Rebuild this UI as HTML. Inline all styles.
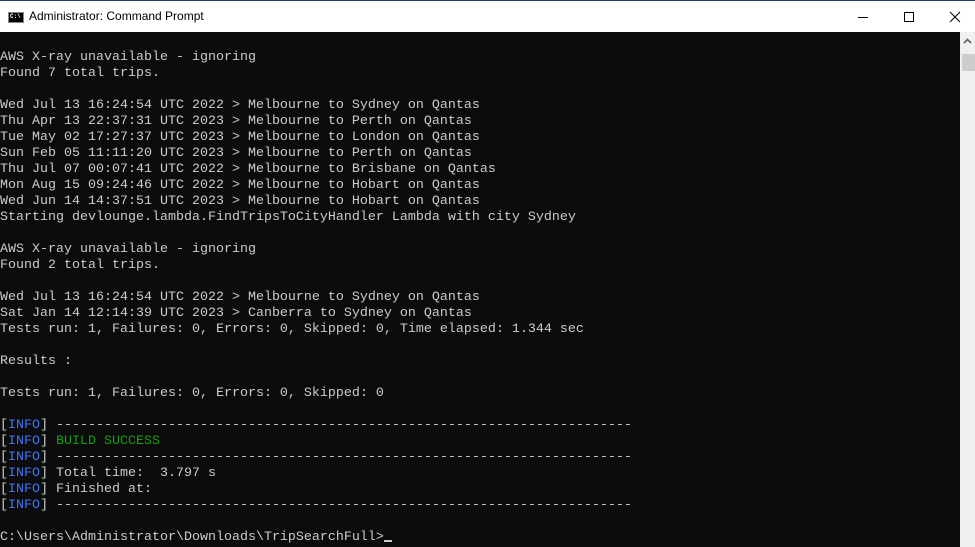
<!DOCTYPE html>
<html><head><style>
*{margin:0;padding:0;box-sizing:border-box}
body{width:975px;height:547px;background:#0c0c0c;overflow:hidden;position:relative}
#tb{position:absolute;left:0;top:0;width:975px;height:32px;background:#fff;border-top:1px solid #1c3f6e}
#tb .t{position:absolute;left:29px;top:8px;font:12px "Liberation Sans",sans-serif;color:#000}
#icon{position:absolute;left:8px;top:11px;width:16px;height:11px;background:#000;border:1px solid #888}
#icon span{position:absolute;left:1px;top:0px;font:bold 6px "Liberation Mono",monospace;color:#fff}
#con{position:absolute;left:0;top:34px;width:960px;font:13.33px/16px "Liberation Mono",monospace;color:#cccccc;white-space:pre}
.b{color:#3b78ff}.g{color:#13a10e}
#sb{position:absolute;left:960px;top:32px;width:15px;height:515px;background:#f0f0f0}
#th{position:absolute;left:962px;top:54px;width:13px;height:17px;background:#cdcdcd}
.cur{display:inline-block;width:8px;height:2px;background:#ccc;vertical-align:-2px}
</style></head><body>
<div id="tb"><div id="icon"><span>C:\</span></div><div class="t">Administrator: Command Prompt</div>
<svg style="position:absolute;left:850px;top:8px" width="120" height="18">
<line x1="8" y1="8.5" x2="18" y2="8.5" stroke="#000"/>
<rect x="54.5" y="3.5" width="9" height="9" fill="none" stroke="#000"/>
<path d="M100 3L110 13M110 3L100 13" stroke="#000"/>
</svg></div>
<div id="sb"><svg style="position:absolute;left:3px;top:6px" width="9" height="6"><path d="M1 5L4.5 1.5L8 5" stroke="#606060" stroke-width="1.6" fill="none"/></svg></div><div id="th"></div>
<div id="con">
AWS X-ray unavailable - ignoring
Found 7 total trips.

Wed Jul 13 16:24:54 UTC 2022 > Melbourne to Sydney on Qantas
Thu Apr 13 22:37:31 UTC 2023 > Melbourne to Perth on Qantas
Tue May 02 17:27:37 UTC 2023 > Melbourne to London on Qantas
Sun Feb 05 11:11:20 UTC 2023 > Melbourne to Perth on Qantas
Thu Jul 07 00:07:41 UTC 2022 > Melbourne to Brisbane on Qantas
Mon Aug 15 09:24:46 UTC 2022 > Melbourne to Hobart on Qantas
Wed Jun 14 14:37:51 UTC 2023 > Melbourne to Hobart on Qantas
Starting devlounge.lambda.FindTripsToCityHandler Lambda with city Sydney

AWS X-ray unavailable - ignoring
Found 2 total trips.

Wed Jul 13 16:24:54 UTC 2022 > Melbourne to Sydney on Qantas
Sat Jan 14 12:14:39 UTC 2023 > Canberra to Sydney on Qantas
Tests run: 1, Failures: 0, Errors: 0, Skipped: 0, Time elapsed: 1.344 sec

Results :

Tests run: 1, Failures: 0, Errors: 0, Skipped: 0

[<span class="b">INFO</span>] ------------------------------------------------------------------------
[<span class="b">INFO</span>] <span class="g">BUILD SUCCESS</span>
[<span class="b">INFO</span>] ------------------------------------------------------------------------
[<span class="b">INFO</span>] Total time:  3.797 s
[<span class="b">INFO</span>] Finished at:
[<span class="b">INFO</span>] ------------------------------------------------------------------------

C:\Users\Administrator\Downloads\TripSearchFull&gt;<span class="cur"></span></div>
</body></html>
